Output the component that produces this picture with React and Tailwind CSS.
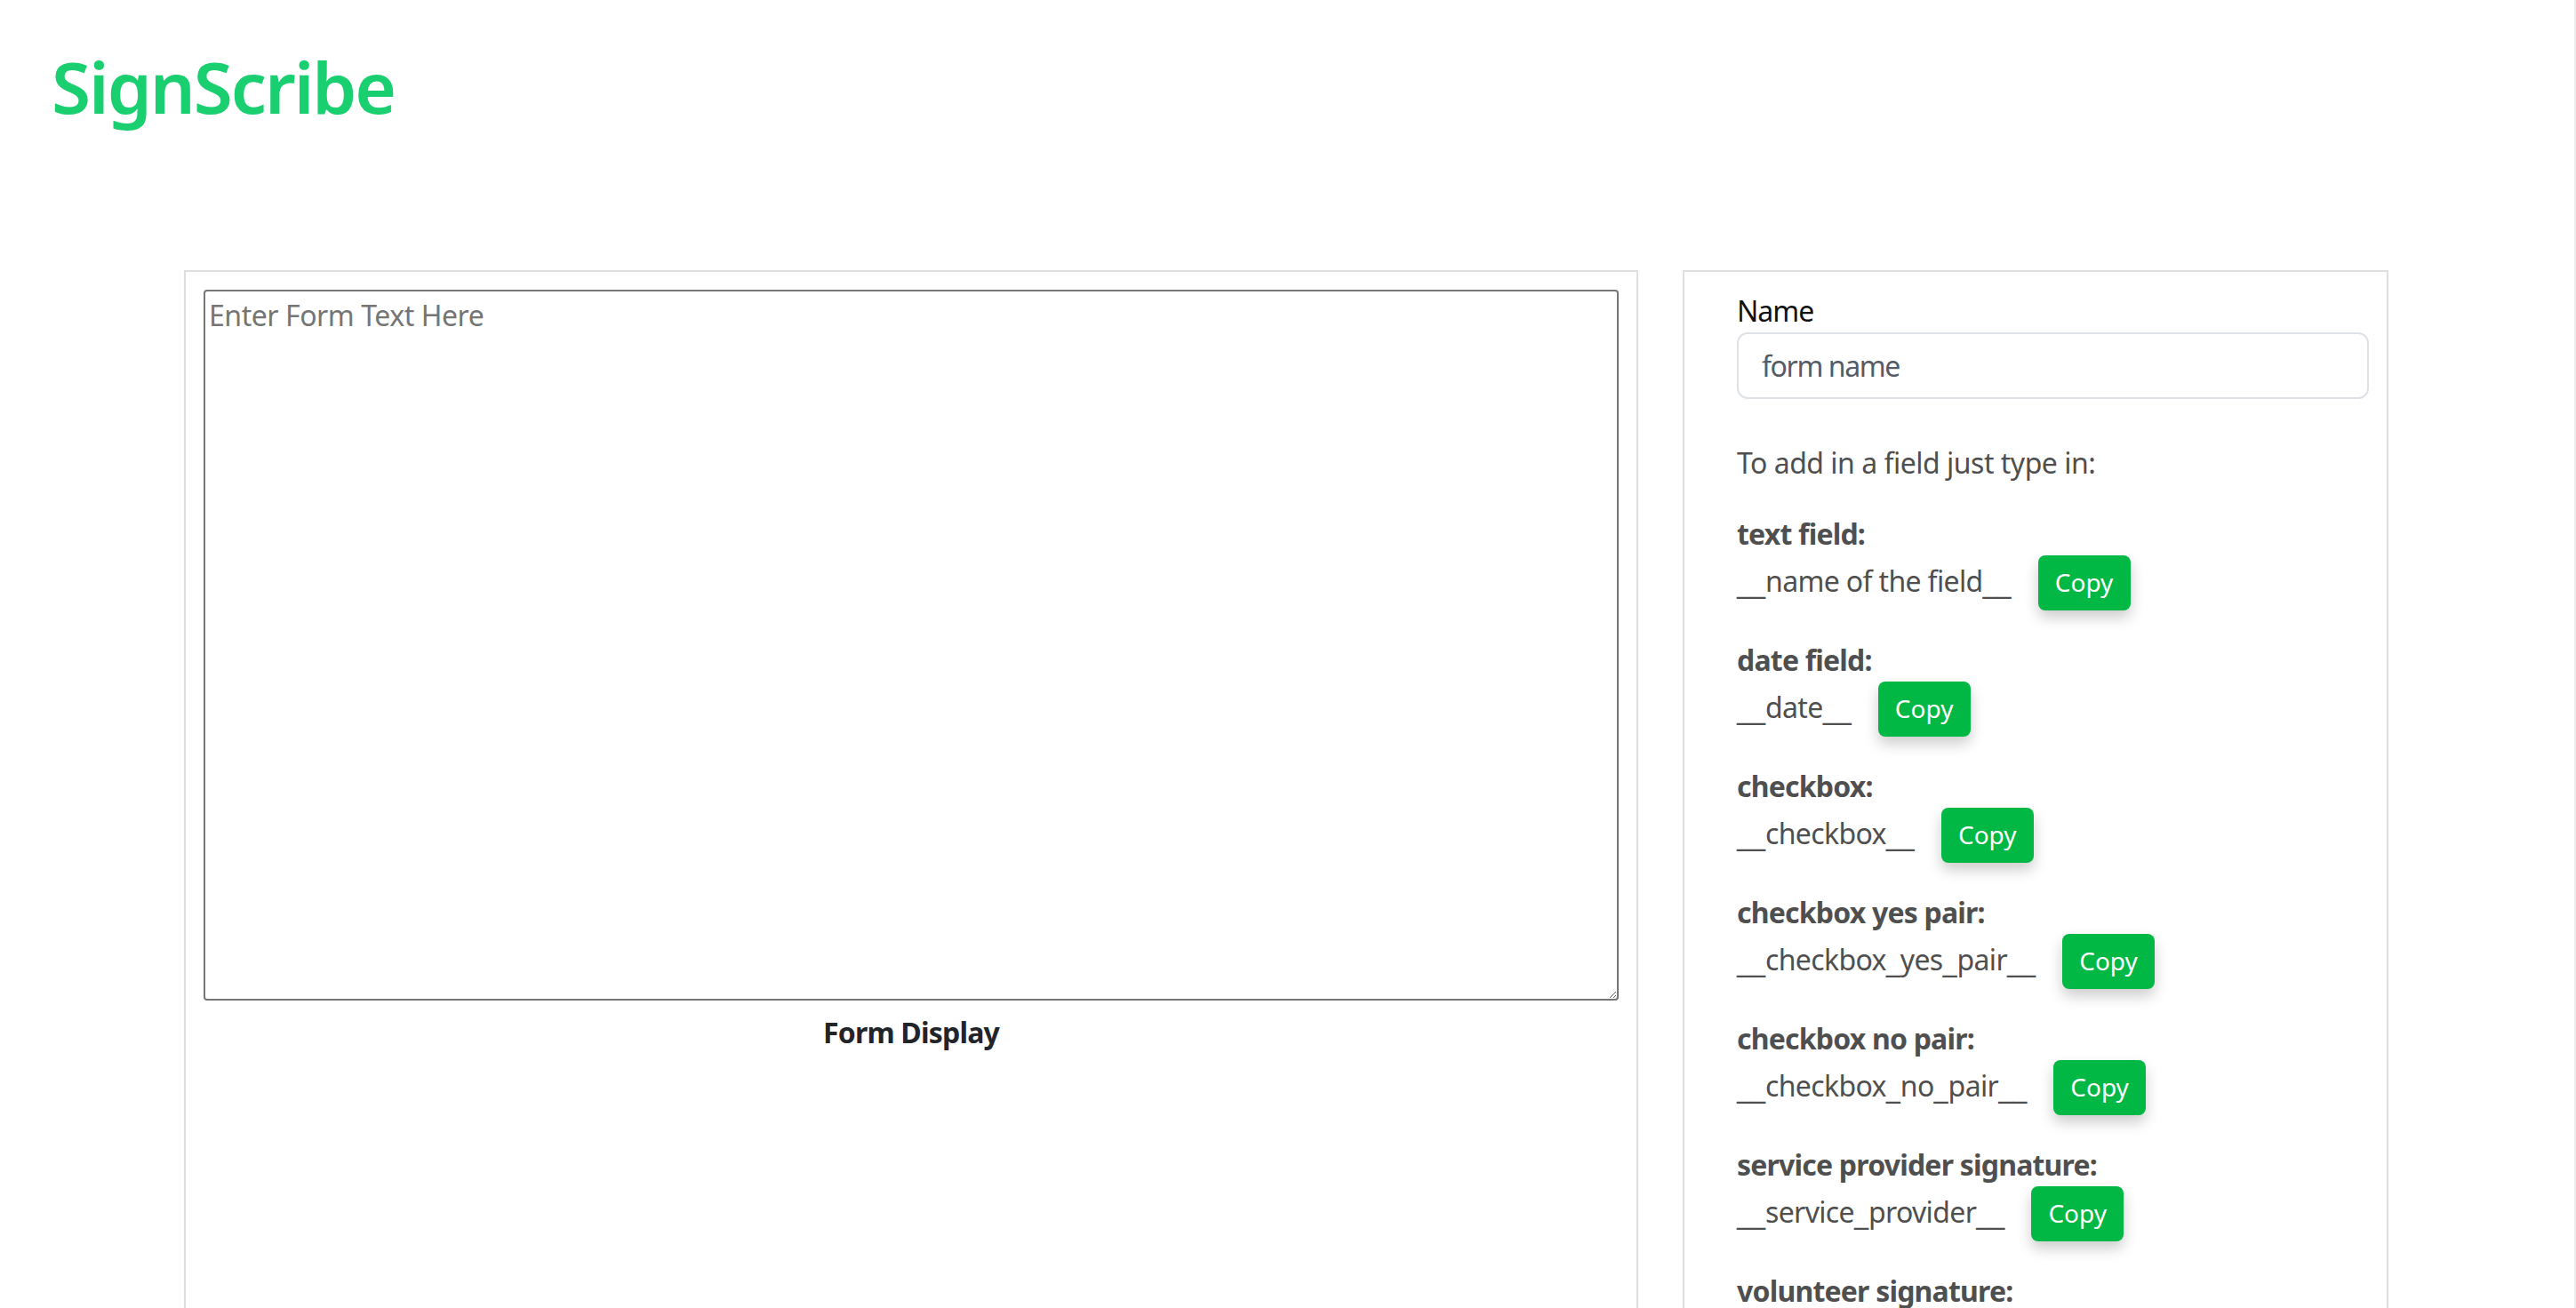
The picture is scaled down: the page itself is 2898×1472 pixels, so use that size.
const fields = [
  { label: "text field:", value: "__name of the field__" },
  { label: "date field:", value: "__date__" },
  { label: "checkbox:", value: "__checkbox__" },
  { label: "checkbox yes pair:", value: "__checkbox_yes_pair__" },
  { label: "checkbox no pair:", value: "__checkbox_no_pair__" },
  { label: "service provider signature:", value: "__service_provider__" },
  { label: "volunteer signature:" },
];

// underscores join up in the reference, DejaVu's do too
function FieldValue({ text }) {
  return (
    <span className="mr-[30px] pb-[3px] tracking-[-0.65px]">
      {text.split(/(_+)/).map((part, i) =>
        part.startsWith("_") ? (
          <span key={i} className="font-['DejaVu_Sans'] tracking-normal">
            {part}
          </span>
        ) : (
          part
        ),
      )}
    </span>
  );
}

function FieldRow({ label, value }) {
  return (
    <div className="mb-8">
      <div className="font-bold leading-[48px]">{label}</div>
      {value && (
        <div className="flex items-center">
          <FieldValue text={value} />
          <button className="h-[62px] w-[104px] rounded-lg bg-[#00b843] pb-[2px] text-[28px] tracking-normal text-white shadow-[0_8px_16px_rgba(0,0,0,0.2)]">
            Copy
          </button>
        </div>
      )}
    </div>
  );
}

export default function App() {
  return (
    <div className="h-[1472px] overflow-hidden border-r-2 border-[#ececec] bg-white font-['Noto_Sans',sans-serif] text-[32px] leading-[48px] tracking-[-0.8px] text-[#4f4f4f]">
      <h1 className="pl-[58px] pt-[49px] pb-[159px] text-[80px] font-semibold leading-[96px] tracking-[-2px] text-[#1acf70]">
        SignScribe
      </h1>
      <div className="flex items-stretch gap-[50px] pl-[207px]">
        <div className="w-[1636px] border-2 border-[#dedede] p-5 text-center">
          <textarea
            className="block h-[800px] w-full rounded border-2 border-[#767676] px-1 pt-[3px] text-left tracking-[-0.45px] placeholder:text-[#757575]"
            placeholder="Enter Form Text Here"
          />
          <div className="mt-3 font-bold text-[#212529]">Form Display</div>
        </div>
        <div className="w-[794px] border-2 border-[#dedede] pb-5 pl-[59px] pr-5 pt-5">
          <div className="tracking-[-1px] text-[#111]">Name</div>
          <input
            className="mb-12 block h-[75px] w-full rounded-xl border-2 border-[#dee2e6] px-[26px] tracking-[-1.4px] placeholder:text-[#555c63]"
            placeholder="form name"
          />
          <p className="mb-8 tracking-[-0.5px]">To add in a field just type in:</p>
          {fields.map((field) => (
            <FieldRow key={field.label} {...field} />
          ))}
        </div>
      </div>
    </div>
  );
}
